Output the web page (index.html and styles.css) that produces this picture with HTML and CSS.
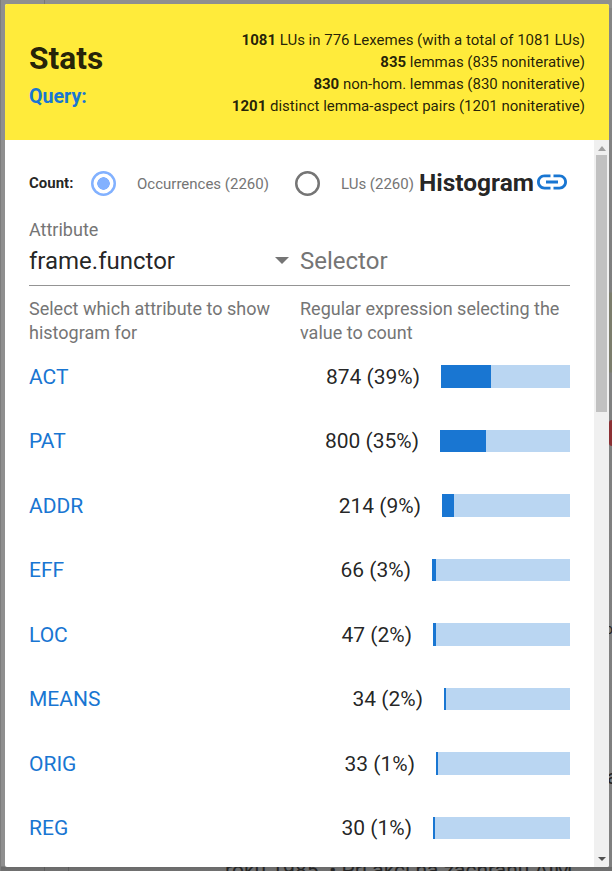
FILE: index.html
```html
<!DOCTYPE html>
<html lang="en">
<head>
<meta charset="utf-8">
<title>Stats</title>
<link rel="stylesheet" href="styles.css">
</head>
<body>
<div class="page-line"></div>
<div class="page-line second"></div>
<div class="page-edge"></div>
<div class="page-text">roku 1985. • Při akci na záchranu AIM</div>
<div class="page-button"></div>
<div class="page-side side-one">o</div>
<div class="page-side side-two">a</div>
<main class="dialog">
  <header class="header">
    <div class="heading">
      <h1>Stats</h1>
      <h2>Query:</h2>
    </div>
    <div class="totals">
      <div><b>1081</b> LUs in 776 Lexemes (with a total of 1081 LUs)</div>
      <div><b>835</b> lemmas (835 noniterative)</div>
      <div><b>830</b> non-hom. lemmas (830 noniterative)</div>
      <div><b>1201</b> distinct lemma-aspect pairs (1201 noniterative)</div>
    </div>
  </header>
  <div class="body">
    <div class="content">
      <div class="count">
        <b class="count-label">Count:</b>
        <span class="radio checked"></span>
        <span class="option first">Occurrences (2260)</span>
        <span class="radio"></span>
        <span class="option">LUs (2260)</span>
        <h3>Histogram</h3>
        <svg class="link" viewBox="2 7 20 10"><path d="M3.900 12c0-1.710 1.390-3.100 3.100-3.100h4V7H7c-2.760 0-5 2.240-5 5s2.240 5 5 5h4v-1.900H7c-1.710 0-3.100-1.390-3.100-3.100zM8 13h8v-2H8v2zm9-6h-4v1.900h4c1.710 0 3.100 1.390 3.100 3.100s-1.390 3.100-3.100 3.100h-4V17h4c2.760 0 5-2.240 5-5s-2.240-5-5-5z"/></svg>
      </div>
      <div class="fields">
        <div class="field">
          <label>Attribute</label>
          <div class="value">frame.functor<span class="arrow"></span></div>
          <p>Select which attribute to show histogram for</p>
        </div>
        <div class="field">
          <label>&nbsp;</label>
          <div class="value empty">Selector</div>
          <p>Regular expression selecting the value to count</p>
        </div>
      </div>
      <div class="rows">
        <div class="row"><a>ACT</a><span class="num">874 (39%)</span><span class="bar" style="width:129px"><i style="width:50px"></i></span></div>
        <div class="row"><a>PAT</a><span class="num">800 (35%)</span><span class="bar" style="width:130px"><i style="width:46px"></i></span></div>
        <div class="row"><a>ADDR</a><span class="num">214 (9%)</span><span class="bar" style="width:128px"><i style="width:12px"></i></span></div>
        <div class="row"><a>EFF</a><span class="num">66 (3%)</span><span class="bar" style="width:138px"><i style="width:4px"></i></span></div>
        <div class="row"><a>LOC</a><span class="num">47 (2%)</span><span class="bar" style="width:137px"><i style="width:3px"></i></span></div>
        <div class="row"><a>MEANS</a><span class="num">34 (2%)</span><span class="bar" style="width:126px"><i style="width:2px"></i></span></div>
        <div class="row"><a>ORIG</a><span class="num">33 (1%)</span><span class="bar" style="width:134px"><i style="width:2px"></i></span></div>
        <div class="row"><a>REG</a><span class="num">30 (1%)</span><span class="bar" style="width:137px"><i style="width:2px"></i></span></div>
      </div>
    </div>
    <div class="scrollbar"><span class="up"></span><span class="thumb"></span><span class="down"></span></div>
  </div>
</main>
</body>
</html>
```
FILE: styles.css
```css
* { box-sizing: border-box; }
body {
  margin: 0;
  height: 871px;
  padding: 4px 3px 4px 5px;
  overflow: hidden;
  position: relative;
  background: linear-gradient(#8f8f8f 0, #8f8f8f 866px, #6a6a6a 867px, #707070 871px);
  font-family: Roboto, sans-serif;
  color: rgba(0, 0, 0, .87);
}
h1, h2, h3, p { margin: 0; }
.page-line {
  position: absolute;
  left: 0;
  top: 0;
  width: 45px;
  height: 871px;
  border-left: 1px solid #7c7c7c;
  border-right: 1px solid rgba(0, 0, 0, .16);
}
.second { top: 867px; width: 69px; }
.page-edge {
  position: absolute;
  left: 609px;
  top: 8px;
  width: 3px;
  height: 859px;
  background: linear-gradient(#858585 0, #7f7f7f 284px, #7c7d6c 285px, #7c7d6c 364px, #808080 365px, #7f7f7f 100%);
}
.page-text {
  position: absolute;
  left: 225px;
  top: 858px;
  font-size: 21px;
  line-height: 24px;
  white-space: nowrap;
  color: #252525;
}
.page-button {
  position: absolute;
  left: 609px;
  top: 420px;
  width: 20px;
  height: 26px;
  border-radius: 3px;
  background: #8b3034;
}
.page-side { position: absolute; font-size: 20px; line-height: 24px; color: #252525; }
.side-one { left: 605px; top: 617px; font-size: 14px; }
.side-two { left: 607px; top: 765px; }
.dialog {
  position: relative;
  height: 863px;
  border-radius: 2px;
  overflow: hidden;
  background: #fff;
}
.header {
  height: 136px;
  padding: 25px 24px 0;
  display: flex;
  justify-content: space-between;
  background: #ffeb3b;
}
.heading { padding-top: 10px; }
h1 { font-size: 31.7px; line-height: 40px; font-weight: 700; }
h2 { font-size: 19.6px; line-height: 26px; margin-top: 5px; font-weight: 700; color: #1976d2; }
.totals { text-align: right; font-size: 15px; line-height: 22px; white-space: nowrap; }
.body { height: 727px; display: flex; }
.content { width: 589px; padding: 0 24px; overflow: hidden; }
.count { height: 52px; margin-top: 17px; display: flex; align-items: center; white-space: nowrap; }
.count-label { width: 62px; font-size: 15px; }
.radio {
  width: 25px;
  height: 25px;
  flex: none;
  box-shadow: inset 0 0 0 2.5px #757575;
  border-radius: 50%;
}
.checked {
  box-shadow: inset 0 0 0 2.5px #82b1ff;
  background: radial-gradient(circle, #82b1ff 6px, transparent 6.5px);
}
.option { margin-left: 21px; padding-top: 2px; font-size: 15px; color: #757575; }
.first { width: 158px; }
h3 { margin-left: 5px; font-size: 24.5px; line-height: 30px; font-weight: 700; }
.link { width: 30px; height: 16px; margin: 0 0 2px 3px; flex: none; fill: #1976d2; }
.fields { display: flex; height: 137px; margin-top: 8px; }
.field { width: 271px; color: #757575; }
.field:last-child { width: 270px; }
.field label { display: block; font-size: 18px; line-height: 24px; padding-top: 1px; }
.value {
  height: 44px;
  padding: 0 11px 6px 0;
  display: flex;
  align-items: center;
  justify-content: space-between;
  border-bottom: 1px solid #949494;
  font-size: 24px;
  color: rgba(0, 0, 0, .87);
}
.empty { color: #757575; }
.arrow { border: 7px solid transparent; border-top-color: #757575; border-bottom: 0; }
.field p { margin-top: 11px; font-size: 18px; line-height: 24px; }
.rows { margin-top: -9.75px; }
.row { display: flex; align-items: center; height: 64.5px; font-size: 21px; }
.row a { flex: 1; color: #1976d2; }
.num { margin-right: 21px; white-space: nowrap; }
.bar { height: 22.6px; display: flex; background: #bad6f2; flex: none; }
.bar i { background: #1976d2; }
.scrollbar {
  width: 15px;
  display: flex;
  flex-direction: column;
  align-items: center;
  background: #f0f0f0;
}
.up { border: 4px solid transparent; border-bottom: 5px solid #a0a0a0; border-top: 0; margin: 6px 0 4px; }
.thumb { width: 11px; height: 257px; background: #c1c1c1; }
.down { border: 4px solid transparent; border-top: 4px solid #505050; border-bottom: 0; margin-top: auto; margin-bottom: 6px; }
```
